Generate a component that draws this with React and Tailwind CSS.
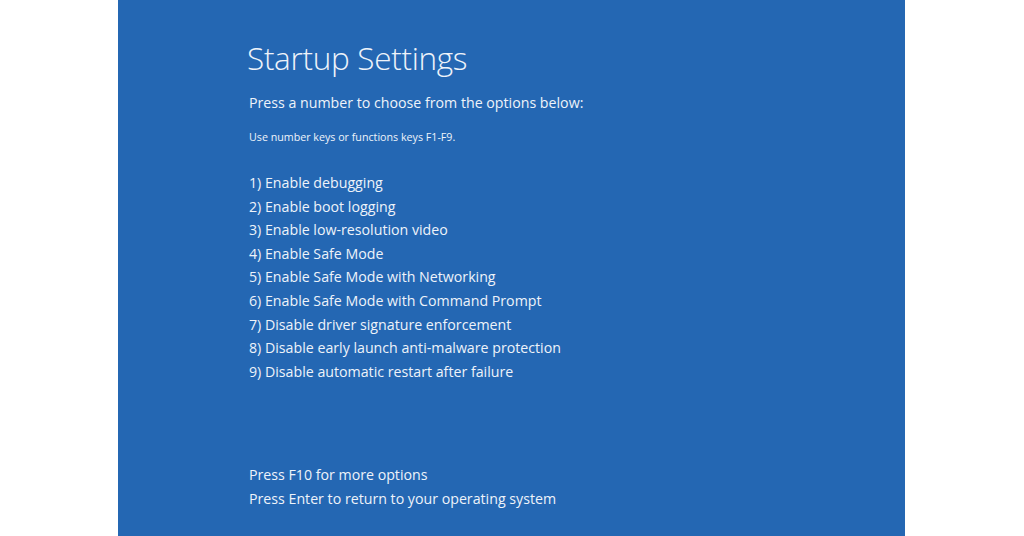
export default function App() {
  const items = [
    "1) Enable debugging",
    "2) Enable boot logging",
    "3) Enable low-resolution video",
    "4) Enable Safe Mode",
    "5) Enable Safe Mode with Networking",
    "6) Enable Safe Mode with Command Prompt",
    "7) Disable driver signature enforcement",
    "8) Disable early launch anti-malware protection",
    "9) Disable automatic restart after failure",
  ];
  return (
    <div className="w-[1024px] h-[536px] bg-white flex overflow-hidden" style={{ fontFamily: '"Open Sans", "Noto Sans", sans-serif' }}>
      <div className="ml-[118px] w-[787px] h-full bg-[#2467b3] text-[#eef3fa] pl-[129px] flex flex-col">
        <div className="mt-[38px] text-[31.5px] leading-[40px] font-light tracking-[-0.3px]">Startup Settings</div>
        <div className="mt-[15px] pl-[2px] text-[14.2px] leading-[20px]">Press a number to choose from the options below:</div>
        <div className="mt-[17px] pl-[2px] text-[10.7px] leading-[14px]">Use number keys or functions keys F1-F9.</div>
        <div className="mt-[27px] pl-[2px] flex flex-col">
          {items.map((t) => (
            <div key={t} className="text-[14.2px] leading-[23.6px]">{t}</div>
          ))}
        </div>
        <div className="mt-[80px] pl-[2px] flex flex-col">
          <div className="text-[14.2px] leading-[23.6px]">Press F10 for more options</div>
          <div className="text-[14.2px] leading-[23.6px]">Press Enter to return to your operating system</div>
        </div>
      </div>
    </div>
  );
}
